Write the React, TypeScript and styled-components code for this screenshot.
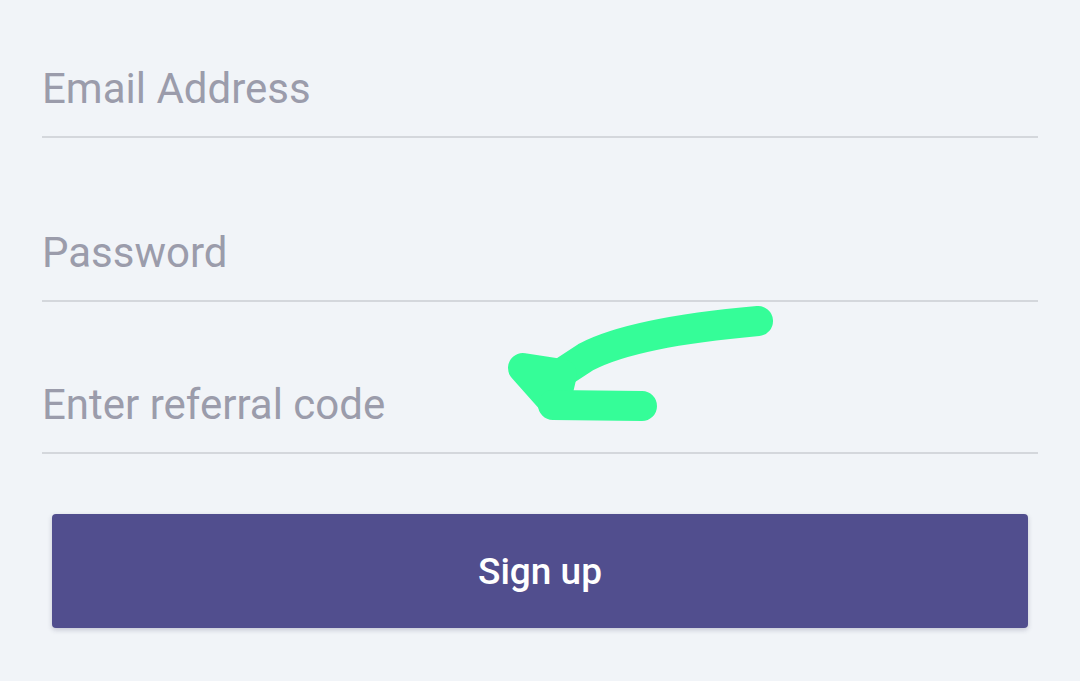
import styled, { createGlobalStyle } from "styled-components";

const GlobalStyle = createGlobalStyle`
  html, body {
    margin: 0;
    padding: 0;
    background: #f1f4f8;
    font-family: Roboto, "Noto Sans", Arial, sans-serif;
  }
`;

const fields = [
  { placeholder: "Email Address", type: "email", gap: 42 },
  { placeholder: "Password", type: "password", gap: 68 },
  { placeholder: "Enter referral code", type: "text", gap: 56 },
];

const App: React.FC = () => {
  return (
    <>
      <GlobalStyle />
      <Page>
        <Form onSubmit={(e) => e.preventDefault()}>
          {fields.map((f) => (
            <Field key={f.placeholder} $gap={f.gap} type={f.type} placeholder={f.placeholder} />
          ))}
          <SubmitButton type="submit">Sign up</SubmitButton>
        </Form>
        {/* hand drawn marker arrow on top of the form */}
        <Arrow width="1080" height="681" viewBox="0 0 1080 681">
          <path d="M758 321 C 690 327, 622 338, 586 357 L 560 374" />
          <path className="head" d="M523 368 L 562 374 L 555 404 Z" />
          <path d="M553 405 L 642 406" />
        </Arrow>
      </Page>
    </>
  );
};

const Page = styled.div`
  position: relative;
  width: 1080px;
  height: 681px;
  overflow: hidden;
`;

const Form = styled.form`
  display: flex;
  flex-direction: column;
  padding: 0 42px;
`;

const Field = styled.input<{ $gap: number }>`
  display: block;
  box-sizing: border-box;
  width: 100%;
  height: 96px;
  margin-top: ${(p) => p.$gap}px;
  padding: 0 0 2px;
  border: none;
  border-bottom: 2px solid #d4d7dc;
  background: transparent;
  font-family: Roboto, sans-serif;
  font-size: 42px;
  color: #3a3a48;
  outline: none;
  &::placeholder {
    color: #9b9cab;
  }
`;

const SubmitButton = styled.button`
  margin: 60px 10px 0;
  height: 114px;
  border: none;
  border-radius: 4px;
  background: #514e8e;
  box-shadow: 0 2px 5px rgba(40, 40, 80, 0.22);
  color: #ffffff;
  font-family: Roboto, sans-serif;
  font-size: 37px;
  font-weight: 500;
  cursor: pointer;
`;

const Arrow = styled.svg`
  position: absolute;
  left: 0;
  top: 0;
  pointer-events: none;
  path {
    fill: none;
    stroke: #35fd98;
    stroke-width: 30;
    stroke-linecap: round;
    stroke-linejoin: round;
  }
  path.head {
    fill: #35fd98;
  }
`;

export default App;
